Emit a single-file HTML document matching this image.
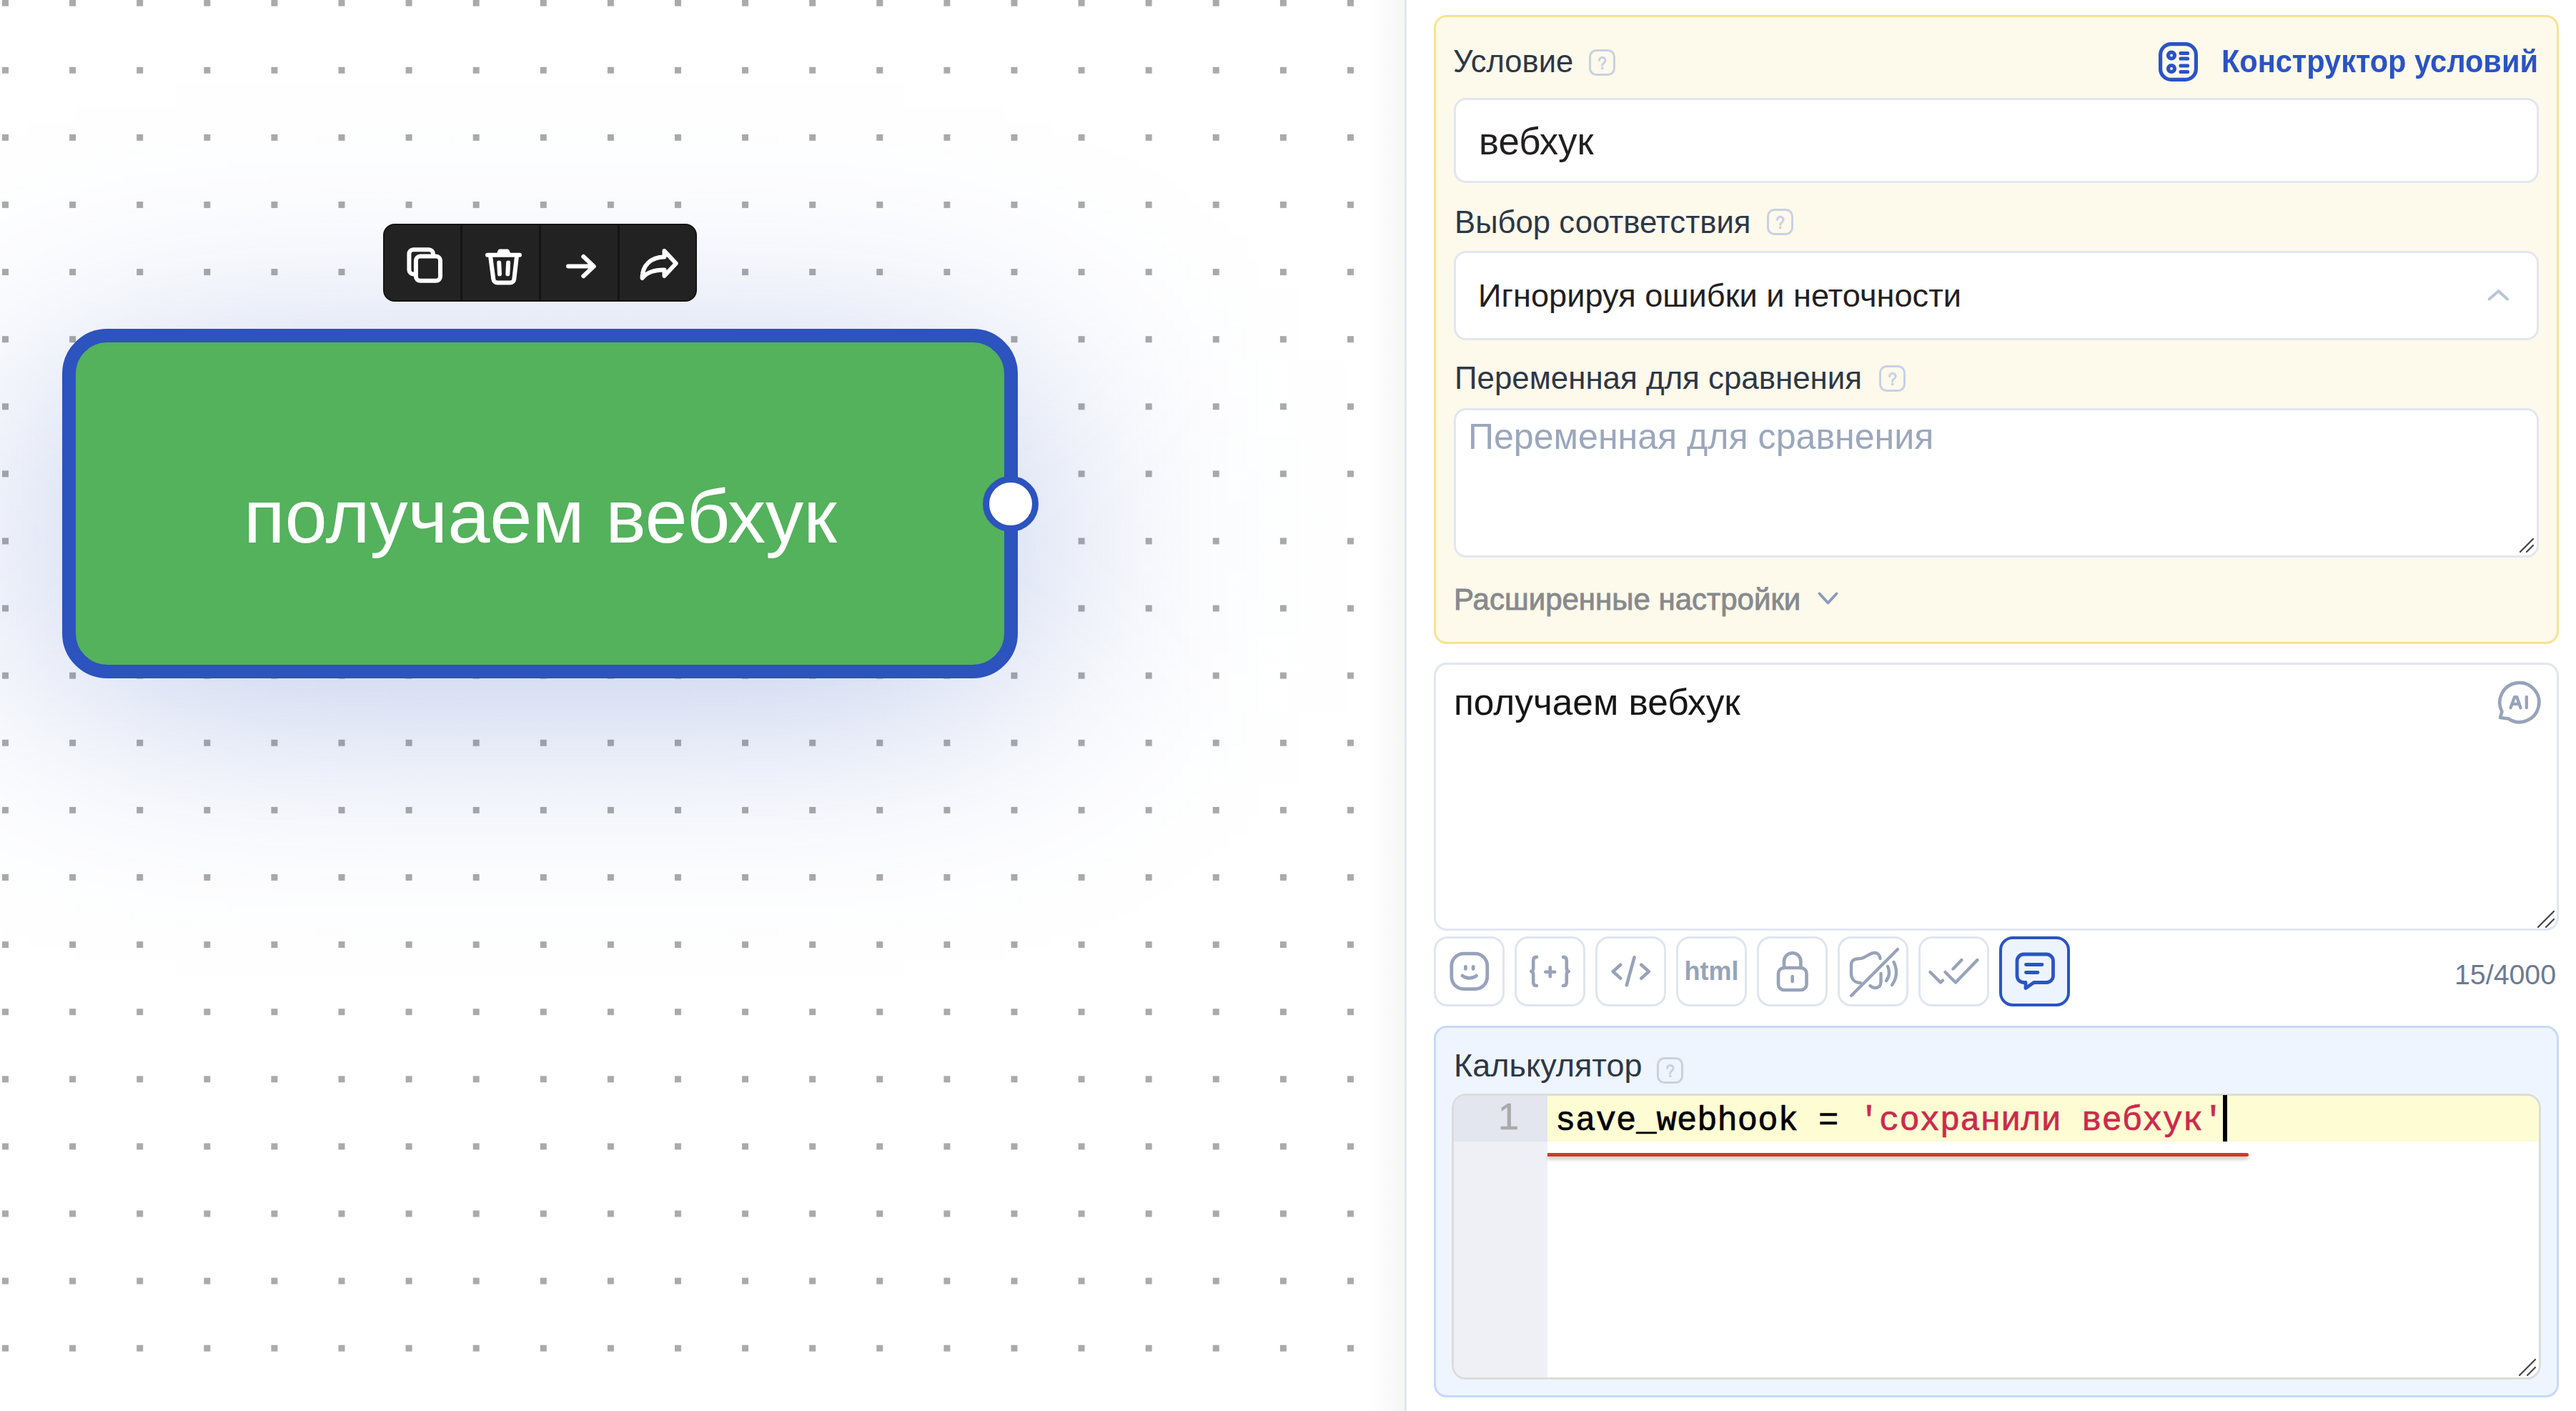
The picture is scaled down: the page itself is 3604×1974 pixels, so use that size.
<!DOCTYPE html>
<html><head><meta charset="utf-8">
<style>
html,body{margin:0;padding:0;width:3604px;height:1974px;overflow:hidden;background:#fff;}
body{position:relative;font-family:"Liberation Sans",sans-serif;}
.a{position:absolute;}
.t{position:absolute;white-space:pre;line-height:normal;}
#canvas{position:absolute;left:0;top:0;width:1965px;height:1974px;overflow:hidden;background:#fff;}
.node{position:absolute;left:87px;top:460px;width:1299px;height:451px;border:19px solid #2c53be;border-radius:63px;background:#54b15c;
}
.handle{position:absolute;left:1375px;top:666px;width:60px;height:60px;border:9px solid #2c53be;border-radius:50%;background:#fff;}
.tb{position:absolute;left:536px;top:313px;width:435px;height:105px;border:2px solid #141414;border-radius:16px;background:#222;overflow:hidden;}
.tb .dv{position:absolute;top:0;width:3px;height:105px;background:#141414;}
#panel{position:absolute;left:1965px;top:0;width:1639px;height:1974px;background:#fff;border-left:3px solid #e2e7f0;box-sizing:border-box;}
.box{position:absolute;box-sizing:border-box;}
.help{position:absolute;width:37px;height:37px;}
.help svg{position:absolute;left:0;top:0;}
.btn{position:absolute;top:1310px;width:99px;height:98px;box-sizing:border-box;border:3px solid #e0e5ef;border-radius:19px;background:#fff;}
.btn svg{position:absolute;left:-3px;top:-3px;}
</style></head>
<body>
<div id="canvas">
 <svg class="a" style="left:0;top:0" width="1965" height="1974">
  <defs><pattern id="dp" x="3" y="-0.3" width="94.1" height="94.1" patternUnits="userSpaceOnUse"><rect x="0" y="0" width="9" height="9" fill="#aaaaaa"/></pattern></defs>
  <rect x="0" y="0" width="1965" height="1974" fill="url(#dp)"/>
 </svg>
<!--GLOW--><div class="a" id="glow" style="left:0px;top:0px;width:1965px;height:1974px;background:linear-gradient(to right,rgba(44,83,190,0.0989) 0px,rgba(44,83,190,0.1192) 33px,rgba(44,83,190,0.1407) 66px,rgba(44,83,190,0.1625) 98px,rgba(44,83,190,0.1841) 131px,rgba(44,83,190,0.2049) 164px,rgba(44,83,190,0.2241) 196px,rgba(44,83,190,0.2415) 229px,rgba(44,83,190,0.2567) 262px,rgba(44,83,190,0.2695) 295px,rgba(44,83,190,0.2800) 328px,rgba(44,83,190,0.2884) 360px,rgba(44,83,190,0.2948) 393px,rgba(44,83,190,0.2996) 426px,rgba(44,83,190,0.3031) 458px,rgba(44,83,190,0.3055) 491px,rgba(44,83,190,0.3072) 524px,rgba(44,83,190,0.3083) 557px,rgba(44,83,190,0.3090) 590px,rgba(44,83,190,0.3094) 622px,rgba(44,83,190,0.3097) 655px,rgba(44,83,190,0.3098) 688px,rgba(44,83,190,0.3099) 720px,rgba(44,83,190,0.3099) 753px,rgba(44,83,190,0.3099) 786px,rgba(44,83,190,0.3098) 819px,rgba(44,83,190,0.3097) 852px,rgba(44,83,190,0.3095) 884px,rgba(44,83,190,0.3090) 917px,rgba(44,83,190,0.3084) 950px,rgba(44,83,190,0.3074) 982px,rgba(44,83,190,0.3058) 1015px,rgba(44,83,190,0.3035) 1048px,rgba(44,83,190,0.3002) 1081px,rgba(44,83,190,0.2955) 1114px,rgba(44,83,190,0.2893) 1146px,rgba(44,83,190,0.2813) 1179px,rgba(44,83,190,0.2711) 1212px,rgba(44,83,190,0.2586) 1244px,rgba(44,83,190,0.2437) 1277px,rgba(44,83,190,0.2266) 1310px,rgba(44,83,190,0.2076) 1343px,rgba(44,83,190,0.1871) 1376px,rgba(44,83,190,0.1655) 1408px,rgba(44,83,190,0.1437) 1441px,rgba(44,83,190,0.1221) 1474px,rgba(44,83,190,0.1016) 1506px,rgba(44,83,190,0.0827) 1539px,rgba(44,83,190,0.0657) 1572px,rgba(44,83,190,0.0509) 1605px,rgba(44,83,190,0.0385) 1638px,rgba(44,83,190,0.0284) 1670px,rgba(44,83,190,0.0204) 1703px,rgba(44,83,190,0.0143) 1736px,rgba(44,83,190,0.0097) 1768px,rgba(44,83,190,0.0064) 1801px,rgba(44,83,190,0.0041) 1834px,rgba(44,83,190,0.0026) 1867px,rgba(44,83,190,0.0016) 1900px,rgba(44,83,190,0.0009) 1932px,rgba(44,83,190,0.0005) 1965px);-webkit-mask-image:linear-gradient(to bottom,rgba(0,0,0,0.0004) 0px,rgba(0,0,0,0.0008) 33px,rgba(0,0,0,0.0017) 66px,rgba(0,0,0,0.0034) 99px,rgba(0,0,0,0.0064) 132px,rgba(0,0,0,0.0116) 164px,rgba(0,0,0,0.0201) 197px,rgba(0,0,0,0.0335) 230px,rgba(0,0,0,0.0535) 263px,rgba(0,0,0,0.0819) 296px,rgba(0,0,0,0.1203) 329px,rgba(0,0,0,0.1700) 362px,rgba(0,0,0,0.2312) 395px,rgba(0,0,0,0.3031) 428px,rgba(0,0,0,0.3834) 461px,rgba(0,0,0,0.4690) 494px,rgba(0,0,0,0.5558) 526px,rgba(0,0,0,0.6394) 559px,rgba(0,0,0,0.7158) 592px,rgba(0,0,0,0.7814) 625px,rgba(0,0,0,0.8336) 658px,rgba(0,0,0,0.8707) 691px,rgba(0,0,0,0.8918) 724px,rgba(0,0,0,0.8965) 757px,rgba(0,0,0,0.8846) 790px,rgba(0,0,0,0.8564) 822px,rgba(0,0,0,0.8125) 855px,rgba(0,0,0,0.7542) 888px,rgba(0,0,0,0.6835) 921px,rgba(0,0,0,0.6035) 954px,rgba(0,0,0,0.5180) 987px,rgba(0,0,0,0.4312) 1020px,rgba(0,0,0,0.3474) 1053px,rgba(0,0,0,0.2704) 1086px,rgba(0,0,0,0.2031) 1119px,rgba(0,0,0,0.1469) 1152px,rgba(0,0,0,0.1022) 1184px,rgba(0,0,0,0.0683) 1217px,rgba(0,0,0,0.0438) 1250px,rgba(0,0,0,0.0270) 1283px,rgba(0,0,0,0.0159) 1316px,rgba(0,0,0,0.0090) 1349px,rgba(0,0,0,0.0049) 1382px,rgba(0,0,0,0.0025) 1415px,rgba(0,0,0,0.0012) 1448px,rgba(0,0,0,0.0006) 1480px,rgba(0,0,0,0.0003) 1513px,rgba(0,0,0,0.0001) 1546px,rgba(0,0,0,0.0000) 1579px,rgba(0,0,0,0.0000) 1612px,rgba(0,0,0,0.0000) 1645px,rgba(0,0,0,0.0000) 1678px,rgba(0,0,0,0.0000) 1711px,rgba(0,0,0,0.0000) 1744px,rgba(0,0,0,0.0000) 1777px,rgba(0,0,0,0.0000) 1810px,rgba(0,0,0,0.0000) 1842px,rgba(0,0,0,0.0000) 1875px,rgba(0,0,0,0.0000) 1908px,rgba(0,0,0,0.0000) 1941px,rgba(0,0,0,0.0000) 1974px);mask-image:linear-gradient(to bottom,rgba(0,0,0,0.0004) 0px,rgba(0,0,0,0.0008) 33px,rgba(0,0,0,0.0017) 66px,rgba(0,0,0,0.0034) 99px,rgba(0,0,0,0.0064) 132px,rgba(0,0,0,0.0116) 164px,rgba(0,0,0,0.0201) 197px,rgba(0,0,0,0.0335) 230px,rgba(0,0,0,0.0535) 263px,rgba(0,0,0,0.0819) 296px,rgba(0,0,0,0.1203) 329px,rgba(0,0,0,0.1700) 362px,rgba(0,0,0,0.2312) 395px,rgba(0,0,0,0.3031) 428px,rgba(0,0,0,0.3834) 461px,rgba(0,0,0,0.4690) 494px,rgba(0,0,0,0.5558) 526px,rgba(0,0,0,0.6394) 559px,rgba(0,0,0,0.7158) 592px,rgba(0,0,0,0.7814) 625px,rgba(0,0,0,0.8336) 658px,rgba(0,0,0,0.8707) 691px,rgba(0,0,0,0.8918) 724px,rgba(0,0,0,0.8965) 757px,rgba(0,0,0,0.8846) 790px,rgba(0,0,0,0.8564) 822px,rgba(0,0,0,0.8125) 855px,rgba(0,0,0,0.7542) 888px,rgba(0,0,0,0.6835) 921px,rgba(0,0,0,0.6035) 954px,rgba(0,0,0,0.5180) 987px,rgba(0,0,0,0.4312) 1020px,rgba(0,0,0,0.3474) 1053px,rgba(0,0,0,0.2704) 1086px,rgba(0,0,0,0.2031) 1119px,rgba(0,0,0,0.1469) 1152px,rgba(0,0,0,0.1022) 1184px,rgba(0,0,0,0.0683) 1217px,rgba(0,0,0,0.0438) 1250px,rgba(0,0,0,0.0270) 1283px,rgba(0,0,0,0.0159) 1316px,rgba(0,0,0,0.0090) 1349px,rgba(0,0,0,0.0049) 1382px,rgba(0,0,0,0.0025) 1415px,rgba(0,0,0,0.0012) 1448px,rgba(0,0,0,0.0006) 1480px,rgba(0,0,0,0.0003) 1513px,rgba(0,0,0,0.0001) 1546px,rgba(0,0,0,0.0000) 1579px,rgba(0,0,0,0.0000) 1612px,rgba(0,0,0,0.0000) 1645px,rgba(0,0,0,0.0000) 1678px,rgba(0,0,0,0.0000) 1711px,rgba(0,0,0,0.0000) 1744px,rgba(0,0,0,0.0000) 1777px,rgba(0,0,0,0.0000) 1810px,rgba(0,0,0,0.0000) 1842px,rgba(0,0,0,0.0000) 1875px,rgba(0,0,0,0.0000) 1908px,rgba(0,0,0,0.0000) 1941px,rgba(0,0,0,0.0000) 1974px);"></div><!--/GLOW-->
 <div class="node"></div>
 <div class="handle"></div>
 <div class="t" style="left:341px;top:661.5px;font-size:106.4px;color:#fff;">получаем вебхук</div>
 <div class="tb">
  <div class="dv" style="left:106px"></div>
  <div class="dv" style="left:216px"></div>
  <div class="dv" style="left:326px"></div>
 </div>
 <svg class="a" style="left:0;top:0" width="1965" height="1974" fill="none" stroke="#fff" stroke-width="5.5" stroke-linecap="round" stroke-linejoin="round">
  <!-- copy -->
  <rect x="572.4" y="349.2" width="33.5" height="34.2" rx="6" stroke-width="6"/>
  <rect x="581.9" y="358.6" width="34.1" height="34.2" rx="6" fill="#222" stroke-width="6"/>
  <!-- trash -->
  <path d="M682 356.8 H727" stroke-width="6"/>
  <path d="M686.3 360 L690.3 390.5 a5.5 5.5 0 0 0 5.5 5 h18 a5.5 5.5 0 0 0 5.5 -5 L722.8 360" stroke-width="6"/>
  <path d="M697.3 356 L699.3 351.3 h10.6 L712 356" stroke-width="5.5"/>
  <path d="M698.2 367.5 L699 383.3 M711.1 367.5 L710.3 383.3" stroke-width="6"/>
  <!-- arrow -->
  <path d="M795 372.6 H830.5 M816.3 359 L830.8 372.6 L816.3 386.2" stroke-width="6"/>
  <!-- share -->
  <path d="M929.5 359.5 V351 L945.8 368.5 L929.5 386 V377.5 C916 377.5 905 381 898.5 389 C898.5 372 910 359.5 929.5 359.5 Z" stroke-width="6" stroke-linejoin="round"/>
 </svg>
</div>

<div id="panel"></div>
<div class="a" style="left:1915px;top:0;width:50px;height:1974px;background:linear-gradient(to right,rgba(0,0,0,0),rgba(20,30,40,0.04));"></div>

<!-- yellow box -->
<div class="box" style="left:2006px;top:21px;width:1574px;height:880px;border:3px solid #f8e38f;border-radius:18px;background:#fdf9eb;"></div>
<div class="t" style="left:2033px;top:62px;font-size:43.5px;color:#2d3748;">Условие</div>
<div class="help" style="left:2222.5px;top:68.5px;"><svg width="37" height="37" fill="none" stroke="#c8d1e3" stroke-width="3" stroke-linecap="round"><rect x="1.5" y="1.5" width="34" height="34" rx="9"/><path d="M14.6 15.4 a4.2 4.2 0 1 1 6.3 3.7 c-1.4 0.8 -2.2 1.7 -2.2 3.2 v0.2"/><circle cx="18.7" cy="26.4" r="0.9" fill="#c8d1e3" stroke-width="2"/></svg></div>
<svg class="a" style="left:3015px;top:54px" width="66" height="66" fill="none" stroke="#2b53c4" stroke-width="5.2" stroke-linecap="round" stroke-linejoin="round">
 <rect x="7.6" y="7.6" width="49.8" height="49.8" rx="15"/>
 <circle cx="23" cy="23.5" r="4.5"/><circle cx="23" cy="42" r="4.5"/>
 <path d="M36 20.5 H45.5 M36 28 H45.5 M36 38 H45.5 M36 46.5 H45.5"/>
</svg>
<div class="t" style="right:53px;top:60px;font-size:45px;font-weight:bold;color:#2b53c4;transform:scaleX(0.923);transform-origin:100% 50%;">Конструктор условий</div>

<div class="box" style="left:2034px;top:137px;width:1518px;height:119px;border:3px solid #e1e6f0;border-radius:17px;background:#fff;"></div>
<div class="t" style="left:2069px;top:166.5px;font-size:52.8px;color:#231f20;">вебхук</div>

<div class="t" style="left:2035px;top:285.5px;font-size:43.7px;color:#2d3748;">Выбор соответствия</div>
<div class="help" style="left:2471.5px;top:291.5px;"><svg width="37" height="37" fill="none" stroke="#c8d1e3" stroke-width="3" stroke-linecap="round"><rect x="1.5" y="1.5" width="34" height="34" rx="9"/><path d="M14.6 15.4 a4.2 4.2 0 1 1 6.3 3.7 c-1.4 0.8 -2.2 1.7 -2.2 3.2 v0.2"/><circle cx="18.7" cy="26.4" r="0.9" fill="#c8d1e3" stroke-width="2"/></svg></div>
<div class="box" style="left:2034px;top:351px;width:1518px;height:125px;border:3px solid #e1e6f0;border-radius:17px;background:#fff;"></div>
<div class="t" style="left:2068px;top:388px;font-size:45.2px;color:#231f20;">Игнорируя ошибки и неточности</div>
<svg class="a" style="left:3470px;top:395px" width="50" height="36" fill="none" stroke="#b9c5d8" stroke-width="4" stroke-linecap="round" stroke-linejoin="round"><path d="M12.5 23.5 L25.7 12.2 L38 23.5"/></svg>

<div class="t" style="left:2035px;top:504.3px;font-size:43.85px;color:#2d3748;">Переменная для сравнения</div>
<div class="help" style="left:2628.5px;top:511.0px;"><svg width="37" height="37" fill="none" stroke="#c8d1e3" stroke-width="3" stroke-linecap="round"><rect x="1.5" y="1.5" width="34" height="34" rx="9"/><path d="M14.6 15.4 a4.2 4.2 0 1 1 6.3 3.7 c-1.4 0.8 -2.2 1.7 -2.2 3.2 v0.2"/><circle cx="18.7" cy="26.4" r="0.9" fill="#c8d1e3" stroke-width="2"/></svg></div>
<div class="box" style="left:2034px;top:571px;width:1518px;height:209px;border:3px solid #e1e6f0;border-radius:17px;background:#fff;"></div>
<div class="t" style="left:2054px;top:581.7px;font-size:50.1px;color:#9ba7bd;">Переменная для сравнения</div>
<svg class="a" style="left:3520px;top:748px" width="30" height="30" fill="none" stroke="#444" stroke-width="2.2" stroke-linecap="round"><path d="M6 24 L24 6 M15 24 L24 15"/></svg>

<div class="t" style="left:2034px;top:815px;font-size:42px;color:#878a8d;-webkit-text-stroke:0.9px #878a8d;">Расширенные настройки</div>
<svg class="a" style="left:2535px;top:820px" width="46" height="34" fill="none" stroke="#8b9cbe" stroke-width="4" stroke-linecap="round" stroke-linejoin="round"><path d="M10.5 10.5 L22.5 23.5 L34.5 10.5"/></svg>

<!-- main textarea -->
<div class="box" style="left:2006px;top:927px;width:1574px;height:375px;border:3px solid #e1e6f0;border-radius:18px;background:#fff;"></div>
<div class="t" style="left:2034px;top:951.8px;font-size:51.4px;color:#161616;">получаем вебхук</div>
<svg class="a" style="left:3485.5px;top:951px" width="72" height="72" fill="none" stroke="#97a3ba" stroke-width="4.6" stroke-linecap="round" stroke-linejoin="round">
 <path d="M12 53 L14.5 44.5 A27.5 27.5 0 1 1 23.5 54.5 Z"/>
 <path d="M26.5 39.2 L32 24.2 h3.3 L40.5 39.2 M28.9 33.8 h9.2 M48.8 23.8 V39.2" stroke-width="4.3"/>
</svg>
<svg class="a" style="left:3546px;top:1270px" width="32" height="32" fill="none" stroke="#444" stroke-width="2.2" stroke-linecap="round"><path d="M5 27 L27 5 M16 27 L27 16"/></svg>

<!-- toolbar buttons -->
<div class="btn" style="left:2006px"><svg width="99" height="98" fill="none" stroke="#97a3ba" stroke-width="4.8" stroke-linecap="round" stroke-linejoin="round">
 <rect x="24.8" y="24.1" width="50" height="49.5" rx="17"/>
 <path d="M44.4 42.3 v3.3 M55.2 42.3 v3.3"/>
 <path d="M40 55 c5.5 4.5 14 4.5 19.6 0"/>
</svg></div>
<div class="btn" style="left:2119px"><svg width="99" height="98" fill="none" stroke="#97a3ba" stroke-width="4.6" stroke-linecap="round" stroke-linejoin="round">
 <path d="M31 28.9 c-3 0 -4.8 1.8 -4.8 4.8 v11.15 c0 2.2 -1.2 3.6 -2.9 4.1 c1.7 0.5 2.9 1.9 2.9 4.1 v11.15 c0 3 1.8 4.8 4.8 4.8"/>
 <path d="M68 28.9 c3 0 4.8 1.8 4.8 4.8 v11.15 c0 2.2 1.2 3.6 2.9 4.1 c-1.7 0.5 -2.9 1.9 -2.9 4.1 v11.15 c0 3 -1.8 4.8 -4.8 4.8"/>
 <path d="M49.75 43.3 v12.9 M43.3 49.75 h12.9"/>
</svg></div>
<div class="btn" style="left:2232px"><svg width="99" height="98" fill="none" stroke="#97a3ba" stroke-width="4.6" stroke-linecap="round" stroke-linejoin="round">
 <path d="M35.2 39.8 L24.7 49.2 L35.2 58.6 M64.3 39.8 L74.8 49.2 L64.3 58.6 M54.5 29.3 L43.8 68.3"/>
</svg></div>
<div class="btn" style="left:2345px"><div class="t" style="left:7px;top:25px;width:79px;text-align:center;font-size:36px;font-weight:bold;color:#97a3ba;">html</div></div>
<div class="btn" style="left:2458px"><svg width="99" height="98" fill="none" stroke="#97a3ba" stroke-width="4.6" stroke-linecap="round" stroke-linejoin="round">
 <rect x="30" y="44" width="39.5" height="31" rx="8"/>
 <path d="M38 44 v-9 a11.7 11.7 0 0 1 23.4 0 v9"/>
 <path d="M49.7 56 v7"/>
</svg></div>
<div class="btn" style="left:2571px"><svg style="left:-5.5px;top:-4px" width="99" height="98" fill="none" stroke="#97a3ba" stroke-width="4.4" stroke-linecap="round" stroke-linejoin="round">
 <path d="M34 66 c-7 0 -12 -4 -13 -11 v-14 c0 -5 3 -8.5 8.5 -8.5 c5 0 8 -1 12 -3.5 c5 -3 9 -5 12 -5 c5 0 8 4 8 8"/>
 <path d="M62.5 53 v12 c0 5 -3 8 -8 8 c-3 0 -5 -1 -7 -3"/>
 <path d="M72 43 c3 6 3 14 -2 20 M80.5 37 c5 10 5 22 -2.5 32"/>
 <path d="M21 84 L86 19"/>
</svg></div>
<div class="btn" style="left:2684px"><svg style="left:-6.5px;top:-5px" width="99" height="98" fill="none" stroke="#97a3ba" stroke-width="4.4" stroke-linecap="round" stroke-linejoin="round">
 <path d="M19.5 52 L34 66.5 L37 63.5 M40.5 52 L55 66.5 L85.5 35 M51.5 47.5 L63.5 35"/>
</svg></div>
<div class="btn" style="left:2797px;border:4.5px solid #2b54c4;background:#eef4fd;"><svg style="left:-4.5px;top:-4.5px" width="99" height="98" fill="none" stroke="#2b54c4" stroke-width="4.8" stroke-linecap="round" stroke-linejoin="round">
 <path d="M34.5 25 h31.5 a9.5 9.5 0 0 1 9.5 9.5 v20.5 a9.5 9.5 0 0 1 -9.5 9.5 h-17.5 l-11.5 8 v-8 h-2.5 a9.5 9.5 0 0 1 -9.5 -9.5 v-20.5 a9.5 9.5 0 0 1 9.5 -9.5 z"/>
 <path d="M37.5 39.5 h22.5 M37.5 50.5 h16.5"/>
</svg></div>
<div class="t" style="left:3434px;top:1341.4px;font-size:39.3px;color:#6c7a93;">15/4000</div>

<!-- calculator -->
<div class="box" style="left:2006px;top:1435px;width:1574px;height:520px;border:3px solid #c5daf9;border-radius:18px;background:#eef5fe;"></div>
<div class="t" style="left:2034px;top:1464.5px;font-size:45px;color:#2d3748;">Калькулятор</div>
<div class="help" style="left:2317.5px;top:1478.5px;"><svg width="37" height="37" fill="none" stroke="#c8d1e3" stroke-width="3" stroke-linecap="round"><rect x="1.5" y="1.5" width="34" height="34" rx="9"/><path d="M14.6 15.4 a4.2 4.2 0 1 1 6.3 3.7 c-1.4 0.8 -2.2 1.7 -2.2 3.2 v0.2"/><circle cx="18.7" cy="26.4" r="0.9" fill="#c8d1e3" stroke-width="2"/></svg></div>
<div class="box" style="left:2031px;top:1529.5px;width:1524px;height:400.5px;border:3px solid #dcdcdc;border-radius:20px;background:#fff;overflow:hidden;">
 <div class="a" style="left:0;top:0;width:131px;height:400px;background:#eff0f5;"></div>
 <div class="a" style="left:0;top:0;width:131px;height:64.5px;background:#e3e6ee;"></div>
 <div class="a" style="left:131px;top:0;width:1400px;height:64.5px;background:#fefcd3;"></div>
</div>
<div class="t" style="left:2096px;top:1531.5px;font-size:52px;color:#aaaaaa;-webkit-text-stroke:0.6px #aaaaaa;">1</div>
<div class="t" style="left:2176px;top:1541.7px;font-family:'Liberation Mono',monospace;font-size:47.2px;color:#000;-webkit-text-stroke:0.7px currentColor;">save_webhook = <span style="color:#cc2a4b">'сохранили вебхук'</span></div>
<div class="a" style="left:3110px;top:1532px;width:6px;height:65px;background:#000;"></div>
<div class="a" style="left:2165px;top:1613px;width:981px;height:5px;background:#d03b25;box-shadow:0 4px 5px rgba(0,0,0,0.22);border-radius:0 3px 3px 0;"></div>
<svg class="a" style="left:3520px;top:1897px" width="32" height="32" fill="none" stroke="#444" stroke-width="2.2" stroke-linecap="round"><path d="M5 27 L27 5 M16 27 L27 16"/></svg>
</body></html>
